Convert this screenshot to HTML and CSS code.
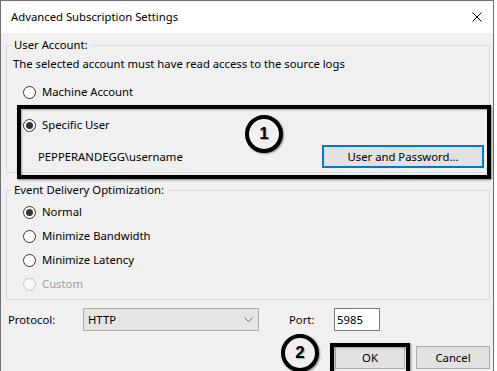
FILE: index.html
```html
<!DOCTYPE html>
<html lang="en">
<head>
    <meta charset="UTF-8">
    <title>Advanced Subscription Settings</title>
    <link rel="stylesheet" href="styles.css">
</head>
<body>
    <div class="dialog">
        <div class="titlebar">
            <span class="title">Advanced Subscription Settings</span>
            <svg class="close" width="10" height="10" viewBox="0 0 10 10"><path d="M0.5 0.5L9.5 9.5M9.5 0.5L0.5 9.5" stroke="#000" stroke-width="1" fill="none"/></svg>
        </div>
        <div class="content">
            <fieldset class="group account">
                <legend>User Account:</legend>
                <p class="note">The selected account must have read access to the source logs</p>
                <div class="radio machine"><span class="dot"></span>Machine Account</div>
                <div class="radio specific checked"><span class="dot"></span>Specific User</div>
                <div class="cred-row">
                    <span class="user-name">PEPPERANDEGG\username</span>
                    <button class="btn focused cred-btn">User and Password...</button>
                </div>
            </fieldset>

            <fieldset class="group delivery">
                <legend>Event Delivery Optimization:</legend>
                <div class="radio checked"><span class="dot"></span>Normal</div>
                <div class="radio"><span class="dot"></span>Minimize Bandwidth</div>
                <div class="radio"><span class="dot"></span>Minimize Latency</div>
                <div class="radio disabled"><span class="dot"></span>Custom</div>
            </fieldset>

            <div class="proto-row">
                <span class="proto-label">Protocol:</span>
                <div class="select">
                    <span>HTTP</span>
                    <svg width="9" height="5" viewBox="0 0 9 5"><path d="M0.5 0.5L4.5 4.5L8.5 0.5" stroke="#6a6a6a" fill="none"/></svg>
                </div>
                <span class="port-label">Port:</span>
                <div class="port-input">5985</div>
            </div>

            <div class="actions">
                <button class="btn ok">OK</button>
                <button class="btn cancel">Cancel</button>
            </div>
        </div>

        <!-- callouts drawn over the dialog -->
        <div class="mark-box box-1"></div>
        <div class="mark-box box-2"></div>
        <div class="mark-num num-1">1</div>
        <div class="mark-num num-2">2</div>
    </div>
</body>
</html>
```

FILE: styles.css
```css
body{
    margin: 0;
    background-color: #fff;
    font-family: 'Noto Sans', 'Open Sans', sans-serif;
    font-size: 11.3px;
    color: #000;
}

.dialog{
    position: relative;
    box-sizing: border-box;
    width: 494px;
    height: 371px;
    border: 1px solid #6e6e6e;
    border-bottom: none;
    display: flex;
    flex-direction: column;
    overflow: hidden;
}

.titlebar{
    height: 32px;
    flex-shrink: 0;
    background-color: #fff;
    display: flex;
    align-items: center;
    justify-content: space-between;
    padding: 0 10px 0 10px;
}

.title{
    line-height: 16px;
}

.close{
    display: block;
    margin-right: 1px;
}

.content{
    flex-grow: 1;
    background-color: #f0f0f0;
    display: flex;
    flex-direction: column;
}

.group{
    border: 1px solid #dcdcdc;
    margin: 0 3px 0 5px;
    padding: 0 5px 0 6px;
    min-width: 0;
}

.group legend{
    padding: 0 3px;
    margin-left: -2px;
    line-height: 16px;
}

.account{
    margin-top: 4px;
    padding-top: 3px;
    padding-bottom: 4px;
}

.delivery{
    margin-top: 9px;
    padding-top: 6px;
    padding-bottom: 7px;
}

.note{
    margin: 0;
    line-height: 16px;
}

.radio{
    display: flex;
    align-items: center;
    gap: 6px;
    margin-left: 10px;
    line-height: 16px;
}

.delivery .radio + .radio{
    margin-top: 8px;
}

.machine{
    margin-top: 12px;
}

.specific{
    margin-top: 17px;
}

.dot{
    box-sizing: border-box;
    width: 13px;
    height: 13px;
    border: 1px solid #333;
    border-radius: 50%;
    background-color: #fff;
    display: flex;
    align-items: center;
    justify-content: center;
}

.checked .dot::after{
    content: '';
    width: 7px;
    height: 7px;
    border-radius: 50%;
    background-color: #333;
}

.disabled{
    color: #a0a0a0;
}

.disabled .dot{
    border-color: #c4c4c4;
    background-color: #f7f7f7;
}

.cred-row{
    margin-top: 12px;
    display: flex;
    align-items: center;
    justify-content: space-between;
}

.user-name{
    margin-left: 25px;
    line-height: 16px;
}

.btn{
    box-sizing: border-box;
    height: 23px;
    font-family: inherit;
    font-size: 11.3px;
    color: #000;
    background-color: #e1e1e1;
    border: 1px solid #adadad;
    padding: 0;
}

.focused{
    border: 2px solid #0078d7;
}

.cred-btn{
    width: 162px;
}

.proto-row{
    margin-top: 8px;
    display: flex;
    align-items: center;
    height: 23px;
}

.proto-label{
    width: 75px;
    margin-left: 7px;
}

.select{
    box-sizing: border-box;
    width: 176px;
    height: 23px;
    background-color: #e5e5e5;
    border: 1px solid #acacac;
    display: flex;
    align-items: center;
    justify-content: space-between;
    padding: 0 5px 0 4px;
}

.select svg{
    display: block;
}

.port-label{
    width: 45px;
    margin-left: 30px;
}

.port-input{
    box-sizing: border-box;
    width: 46px;
    height: 23px;
    background-color: #fff;
    border: 1px solid #7a7a7a;
    padding: 0 2px;
    line-height: 21px;
}

.actions{
    margin-top: 15px;
    display: flex;
    justify-content: flex-end;
    gap: 11px;
    padding-right: 3px;
}

.ok{
    width: 70px;
}

.cancel{
    width: 74px;
}

.mark-box{
    position: absolute;
    box-sizing: border-box;
    border: 4px solid #000;
    box-shadow: 1px 1px 2px rgba(0,0,0,.45), inset 1px 1px 2px rgba(0,0,0,.3);
}

.box-1{
    left: 16px;
    top: 104px;
    width: 474px;
    height: 74px;
}

.box-2{
    left: 329px;
    top: 342px;
    width: 80px;
    height: 40px;
}

.mark-num{
    position: absolute;
    box-sizing: border-box;
    width: 38px;
    height: 38px;
    border: 4px solid #000;
    border-radius: 50%;
    background-color: #f0f0f0;
    box-shadow: 1px 1px 2px rgba(0,0,0,.45);
    display: flex;
    align-items: center;
    justify-content: center;
    font-family: 'Liberation Sans', sans-serif;
    font-weight: 700;
    font-size: 17px;
    text-shadow: 1px 1px 1px rgba(0,0,0,.3);
}

.num-1{
    left: 244px;
    top: 114px;
}

.num-2{
    left: 280px;
    top: 333px;
}
```
